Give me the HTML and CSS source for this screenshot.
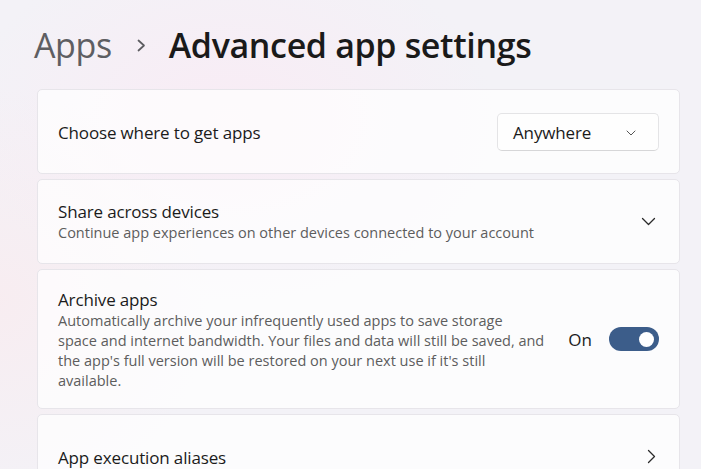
FILE: index.html
```html
<!DOCTYPE html>
<html lang="en">
<head>
<meta charset="utf-8">
<title>Advanced app settings</title>
<link rel="stylesheet" href="styles.css">
</head>
<body>
<main class="page">
  <header class="breadcrumb">
    <span class="crumb-parent">Apps</span>
    <svg class="crumb-sep" width="11" height="13" viewBox="0 0 11 13"><path d="M2.5 1.5 L8 6.5 L2.5 11.5" fill="none" stroke="#5c5c60" stroke-width="1.7" stroke-linecap="round" stroke-linejoin="round"/></svg>
    <h1 class="crumb-current">Advanced app settings</h1>
  </header>

  <section class="cards">
    <div class="card card-single">
      <div class="card-text">
        <div class="card-title">Choose where to get apps</div>
      </div>
      <div class="dropdown">
        <span>Anywhere</span>
        <svg width="10" height="6" viewBox="0 0 10 6"><path d="M1 1 L5 5 L9 1" fill="none" stroke="#555" stroke-width="1" stroke-linecap="round" stroke-linejoin="round"/></svg>
      </div>
    </div>

    <div class="card card-double">
      <div class="card-text">
        <div class="card-title">Share across devices</div>
        <div class="card-desc">Continue app experiences on other devices connected to your account</div>
      </div>
      <svg class="chev" width="15" height="9" viewBox="0 0 15 9"><path d="M1.5 1.5 L7.5 7.5 L13.5 1.5" fill="none" stroke="#2a2a2a" stroke-width="1.3" stroke-linecap="round" stroke-linejoin="round"/></svg>
    </div>

    <div class="card card-archive">
      <div class="card-text">
        <div class="card-title">Archive apps</div>
        <div class="card-desc wrap">Automatically archive your infrequently used apps to save storage space and internet bandwidth. Your files and data will still be saved, and the app's full version will be restored on your next use if it's still available.</div>
      </div>
      <div class="toggle-wrap">
        <span class="toggle-label">On</span>
        <span class="toggle"><span class="knob"></span></span>
      </div>
    </div>

    <div class="card card-single">
      <div class="card-text">
        <div class="card-title">App execution aliases</div>
      </div>
      <svg class="chev" width="9" height="15" viewBox="0 0 9 15"><path d="M1.5 1.5 L7.5 7.5 L1.5 13.5" fill="none" stroke="#2a2a2a" stroke-width="1.3" stroke-linecap="round" stroke-linejoin="round"/></svg>
    </div>
  </section>
</main>
</body>
</html>
```

FILE: styles.css
```css
html, body {
  margin: 0;
  height: 100%;
  overflow: hidden;
}
body {
  font-family: "Open Sans", "Noto Sans", sans-serif;
  color: #1b1b1b;
  background:
    radial-gradient(ellipse 380px 260px at 230px 120px, rgba(250, 234, 244, 0.8), rgba(250, 234, 244, 0) 70%),
    radial-gradient(ellipse 300px 300px at 0px 300px, rgba(248, 236, 240, 0.9), rgba(248, 236, 240, 0) 70%),
    #f3f2f7;
}
.page {
  padding: 21px 21px 0 34px;
}
.breadcrumb {
  display: flex;
  align-items: center;
  height: 48px;
  margin-bottom: 20px;
}
.crumb-parent {
  font-size: 34px;
  color: #5e5e62;
  font-weight: 500;
  letter-spacing: -0.4px;
}
.crumb-sep {
  margin: 0 22px 0 24px;
}
.crumb-current {
  margin: 0;
  font-size: 34px;
  font-weight: 600;
  color: #1a1a1a;
  letter-spacing: -0.35px;
}
.cards {
  display: flex;
  flex-direction: column;
  gap: 5px;
  margin-left: 3px;
}
.card {
  display: flex;
  align-items: center;
  justify-content: space-between;
  background: rgba(255, 255, 255, 0.72);
  border: 1px solid #e7e5ea;
  border-radius: 5px;
  padding: 0 20px 0 20px;
  box-sizing: border-box;
}
.card-single { height: 85px; }
.card-single .card-text { padding-top: 3px; }
.card-double { height: 85px; }
.card-archive { height: 140px; }
.card-archive .card-text { padding-top: 2px; }
.card-title {
  font-size: 17px;
  line-height: 22px;
  letter-spacing: -0.15px;
}
.card-desc {
  font-size: 14.5px;
  line-height: 20px;
  color: #5d5d5d;
  letter-spacing: 0;
}
.card-desc.wrap { width: 487px; }
.dropdown {
  width: 162px;
  height: 38px;
  box-sizing: border-box;
  background: #fefefe;
  border: 1px solid #e4e4e6;
  border-bottom-color: #d6d6d8;
  border-radius: 5px;
  display: flex;
  align-items: center;
  justify-content: space-between;
  padding: 2px 22px 0 15px;
  font-size: 17px;
  letter-spacing: -0.15px;
}
.chev { margin-right: 3px; }
.toggle-wrap {
  display: flex;
  align-items: center;
  gap: 17px;
}
.toggle-label {
  font-size: 17px;
}
.toggle {
  width: 50px;
  height: 24px;
  border-radius: 12px;
  background: #3c5d8a;
  display: flex;
  align-items: center;
  justify-content: flex-end;
  padding: 0 5px;
  box-sizing: border-box;
}
.knob {
  width: 15px;
  height: 15px;
  border-radius: 50%;
  background: #fff;
}
```
